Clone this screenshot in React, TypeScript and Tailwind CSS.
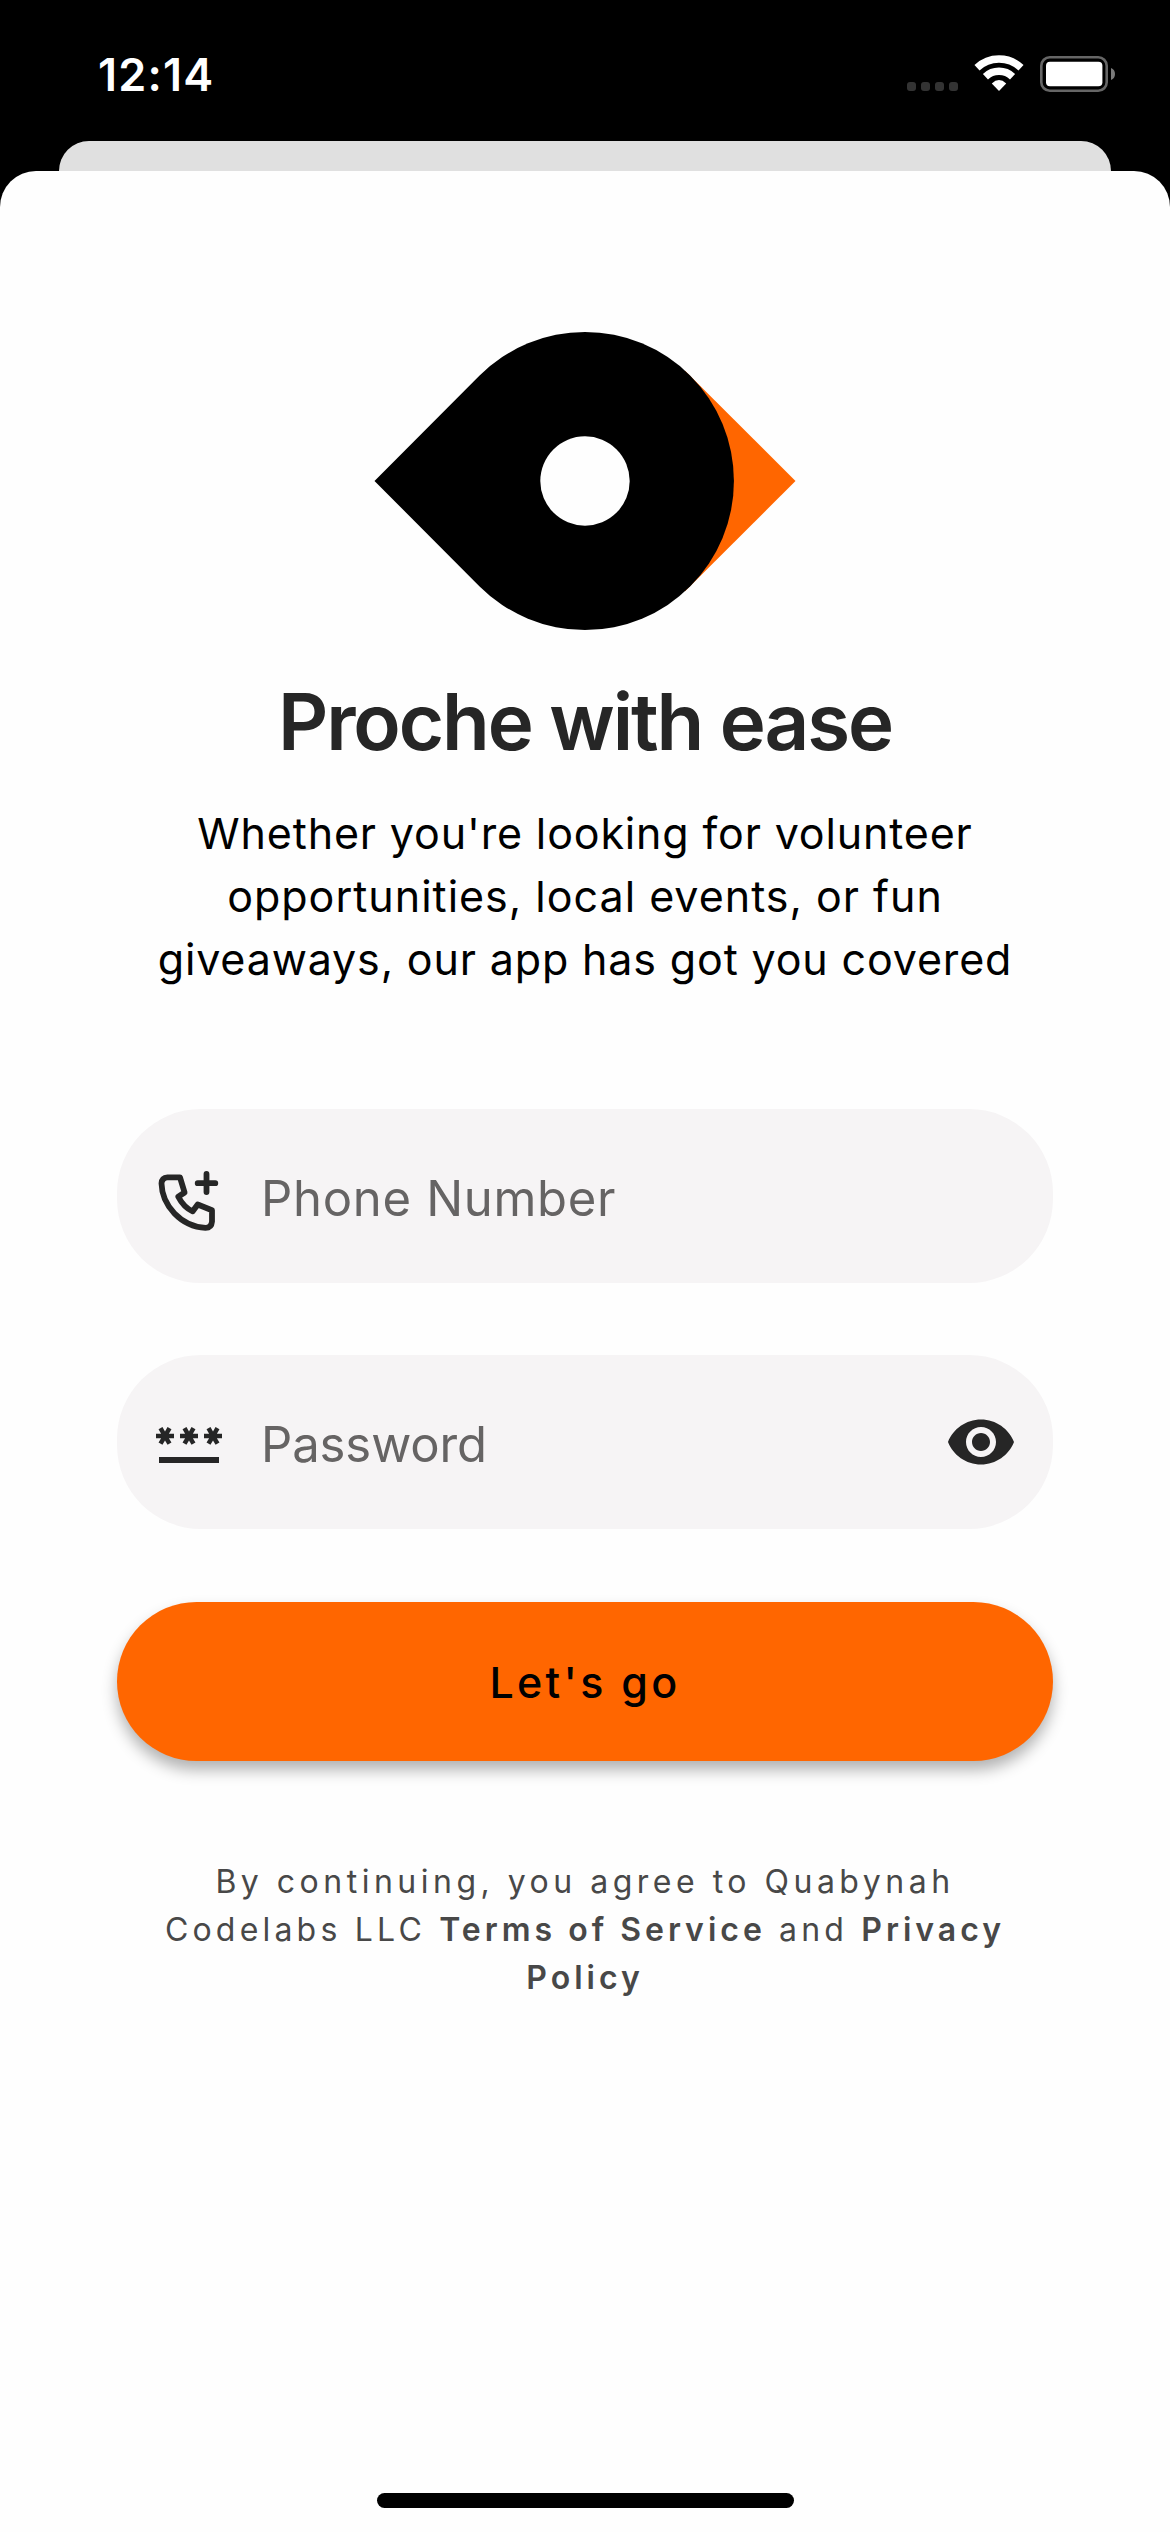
import type { ReactNode } from "react";
import { MdPassword, MdVisibility } from "react-icons/md";

function StatusBar() {
  return (
    <div className="flex h-[141px] items-start justify-between pr-[55px] pl-[98px] text-white">
      <span className="mt-[48px] text-[45px] leading-[54px] font-semibold tracking-[1.2px]">12:14</span>
      <div className="flex pt-[53px]">
        <div className="mt-[29px] flex gap-[5px]">
          {[0, 1, 2, 3].map((i) => (
            <span key={i} className="size-[9px] rounded-[3px] bg-[#333333]" />
          ))}
        </div>
        <svg className="ml-[15px] h-[40px] w-[52px]" viewBox="0 0 52 40" fill="none" stroke="white" strokeWidth="7.4">
          <path d="M4 14.8A32 32 0 0 1 48 14.8" />
          <path d="M12.45 23.7A19.7 19.7 0 0 1 39.55 23.7" />
          <path d="M26 38L18.8 30.4Q26 23.6 33.2 30.4Z" fill="white" stroke="none" />
        </svg>
        <svg className="ml-[15px] h-[40px] w-[75px]" viewBox="0 0 75 40">
          <rect x="1.3" y="4.3" width="65.4" height="33.4" rx="8.5" fill="none" stroke="#666666" strokeWidth="2.6" />
          <rect x="6" y="8.7" width="56.4" height="24.6" rx="4" fill="white" />
          <path d="M71 15Q75 16.5 75 21Q75 25.5 71 27Z" fill="#7a7a7a" />
        </svg>
      </div>
    </div>
  );
}

function Logo() {
  return (
    <svg className="h-[300px] w-[422px]" viewBox="0 0 422 300">
      <path d="M311 39.7L421.5 150L311 260.300Z" fill="#ff6600" />
      <path d="M0.5 150L105.6 44.6A149 149 0 1 1 105.6 255.4Z" fill="black" />
      <circle cx="211" cy="150" r="44.7" fill="#fefefe" />
    </svg>
  );
}

function PhonePlusIcon() {
  return (
    <svg
      className="mt-[9px] ml-[33px] size-[80px]"
      viewBox="0 0 80 80"
      fill="none"
      stroke="#262626"
      strokeWidth="5.8"
      strokeLinecap="round"
      strokeLinejoin="round"
    >
      <path d="M17.5 16.3H30L34.6 31.5L28.3 35.7C31.5 42 36.5 47.5 42.7 50.3L47.7 43.5L62 49.3V60.5Q61.5 66.8 55.5 66.8C31 65.5 12 44.5 11.5 22.5Q11.8 16.5 17.5 16.3Z" />
      <path d="M56.5 13V31M47.7 22.2H65.3" />
    </svg>
  );
}

type FieldProps = { icon: ReactNode; label: string; type: string; tracking: string; action?: ReactNode };

function Field({ icon, label, type, tracking, action }: FieldProps) {
  return (
    <div className="flex h-[174px] items-center rounded-[84px] bg-[#f6f4f5] pr-[36px]">
      <div className="w-[144px] shrink-0">{icon}</div>
      <input
        type={type}
        placeholder={label}
        className={`min-w-0 flex-1 bg-transparent pt-[5px] text-[49px] leading-[64px] outline-none placeholder:text-[#666464] ${tracking}`}
      />
      {action}
    </div>
  );
}

export default function App() {
  return (
    <div className="flex h-[2532px] w-[1170px] flex-col bg-black font-['Inter',sans-serif]">
      <StatusBar />
      <div className="mx-[59px] h-[30px] rounded-t-[30px] bg-[#e0e0e0]" />
      <main className="flex flex-1 flex-col items-center rounded-t-[36px] bg-[#fefefe] pt-[160px]">
        <Logo />
        <h1 className="mt-[43px] text-[78px] leading-[96px] font-semibold tracking-[-2.1px] text-[#262626]">
          Proche with ease
        </h1>
        <p className="mt-[32px] text-center text-[43px] leading-[63px] tracking-[0.85px] text-black">
          Whether you're looking for volunteer
          <br />
          <span className="tracking-[1px]">opportunities, local events, or fun</span>
          <br />
          giveaways, our app has got you covered
        </p>
        <form className="mt-[118px] flex w-[936px] flex-col">
          <Field icon={<PhonePlusIcon />} label="Phone Number" type="tel" tracking="tracking-[0.7px]" />
          <div className="mt-[72px]">
            <Field
              icon={<MdPassword className="ml-[36px] size-[72px] text-[#262626]" />}
              label="Password"
              type="password"
              tracking="tracking-[-0.1px]"
              action={<MdVisibility className="size-[72px] text-[#262626]" />}
            />
          </div>
          <button
            type="button"
            className="mt-[73px] h-[159px] rounded-full bg-[#ff6600] pt-[2px] text-[43px] font-medium tracking-[3.3px] text-black shadow-[0_9px_15px_rgba(0,0,0,0.3)]"
          >
            Let's go
          </button>
        </form>
        <p className="mt-[97px] text-center text-[32px] leading-[48px] tracking-[4.2px] text-[#484848]">
          <span className="tracking-[4.5px]">By continuing, you agree to Quabynah</span>
          <br />
          Codelabs LLC <b className="font-semibold tracking-[4px]">Terms of Service</b> and{" "}
          <b className="font-semibold tracking-[4px]">
            Privacy
            <br />
            Policy
          </b>
        </p>
        <div className="mt-auto mb-[24px] h-[15px] w-[417px] rounded-full bg-black" />
      </main>
    </div>
  );
}
